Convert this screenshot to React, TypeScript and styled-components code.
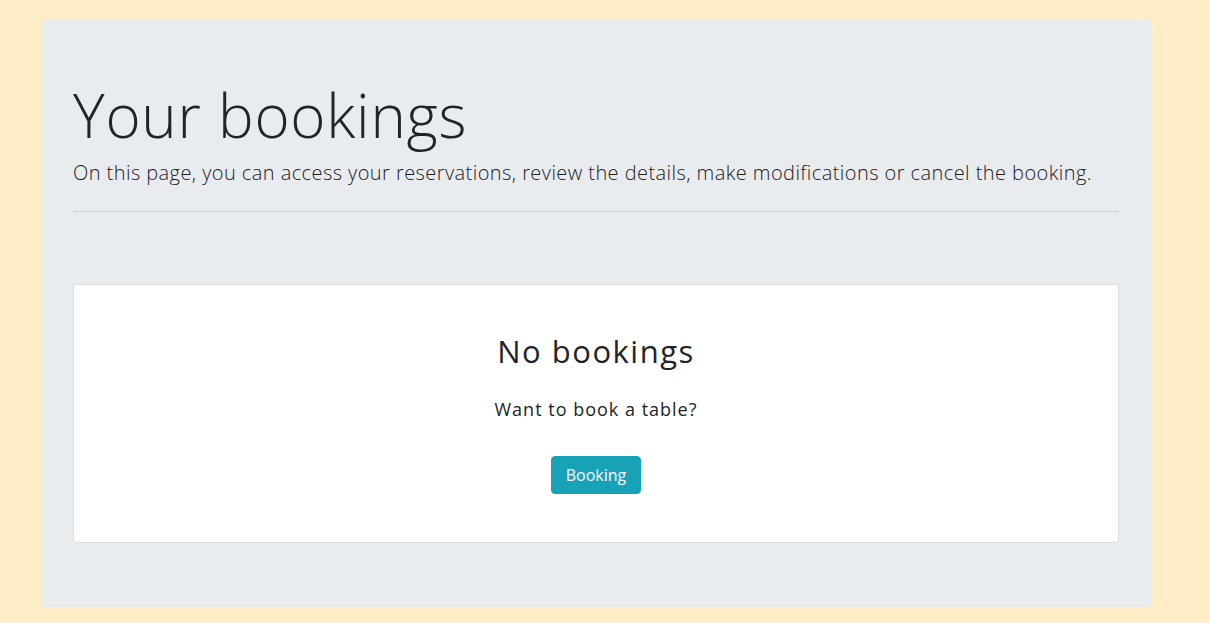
import React from "react";
import styled, { createGlobalStyle } from "styled-components";

const GlobalStyle = createGlobalStyle`
  html, body {
    margin: 0;
    padding: 0;
    background: #ffeec8;
  }
  body {
    font-family: "Open Sans", "Noto Sans", sans-serif;
    color: #212529;
  }
  * { box-sizing: border-box; }
`;

const Page = styled.div`
  padding: 20px 0 16px 41px;
`;

const Jumbotron = styled.section`
  width: 1110px;
  background: #e9ecef;
  border-radius: 5px;
  padding: 64px 32px;
  display: flex;
  flex-direction: column;
`;

const Title = styled.h1`
  margin: 2px 0 0;
  font-size: 60px;
  font-weight: 300;
  line-height: 58px;
  letter-spacing: 0.75px;
  color: #212529;
`;

const Lead = styled.p`
  margin: 14px 0 0;
  font-size: 20px;
  font-weight: 300;
  line-height: 30px;
  letter-spacing: 0.43px;
  color: #1d2024;
`;

const Rule = styled.hr`
  margin: 23px 0 0;
  border: 0;
  border-top: 1px solid rgba(0, 0, 0, 0.1);
  width: 100%;
`;

const Card = styled.div`
  margin-top: 72px;
  background: #fff;
  border: 1px solid rgba(0, 0, 0, 0.125);
  border-radius: 4px;
  padding: 48px 20px 48px;
  display: flex;
  flex-direction: column;
  align-items: center;
`;

const CardTitle = styled.h3`
  margin: 0;
  font-size: 31px;
  font-weight: 400;
  line-height: 36px;
  letter-spacing: 1.5px;
`;

const CardText = styled.p`
  margin: 27px 0 0;
  font-size: 18px;
  font-weight: 400;
  line-height: 26px;
  letter-spacing: 1px;
`;

const Button = styled.button`
  margin-top: 34px;
  width: 90px;
  height: 38px;
  border: 1px solid #17a2b8;
  background: #17a2b8;
  color: #fff;
  border-radius: 4px;
  font-family: inherit;
  font-size: 16px;
  font-weight: 400;
  padding: 0;
  cursor: pointer;
`;

export default function App() {
  return (
    <>
      <GlobalStyle />
      <Page>
        <Jumbotron>
          <Title>Your bookings</Title>
          <Lead>
            On this page, you can access your reservations, review the details,
            make modifications or cancel the booking.
          </Lead>
          <Rule />
          <Card>
            <CardTitle>No bookings</CardTitle>
            <CardText>Want to book a table?</CardText>
            <Button>Booking</Button>
          </Card>
        </Jumbotron>
      </Page>
    </>
  );
}
